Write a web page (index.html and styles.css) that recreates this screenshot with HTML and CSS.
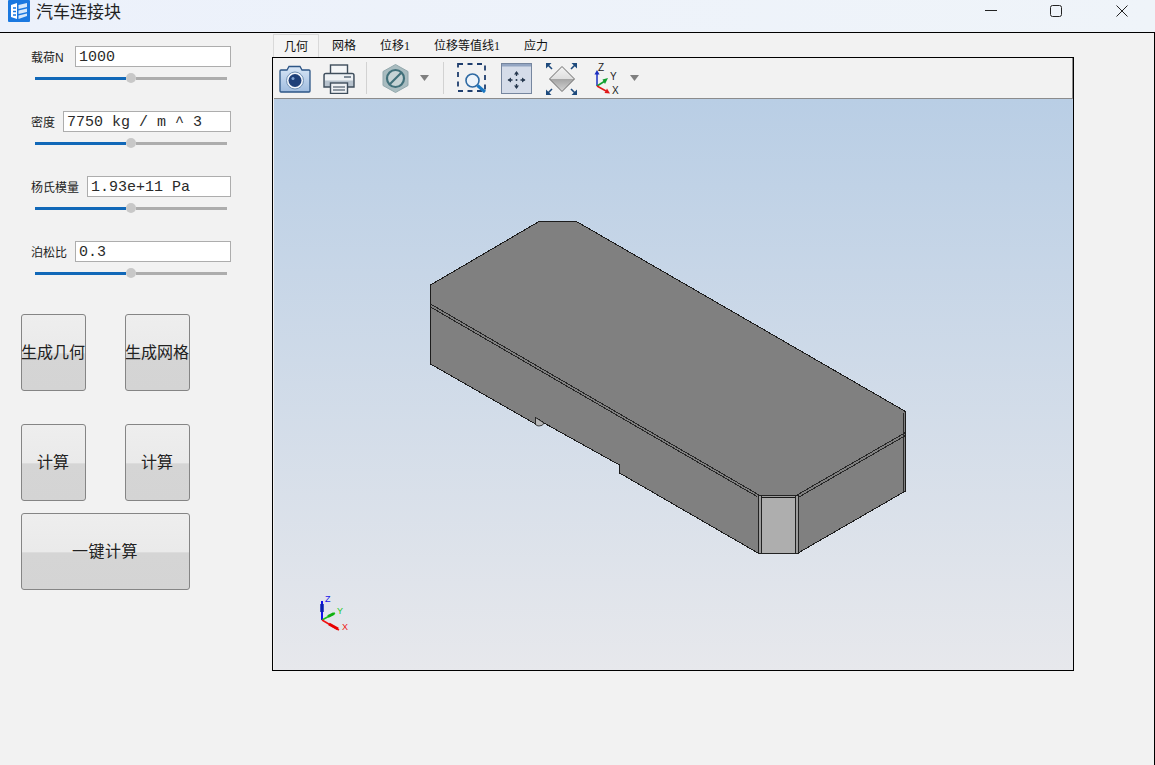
FILE: index.html
```html
<!DOCTYPE html>
<html lang="zh">
<head>
<meta charset="utf-8">
<title>汽车连接块</title>
<link rel="stylesheet" href="styles.css">
</head>
<body>
<div class="window">
  <header class="titlebar">
    <svg class="app-icon" width="22" height="22" viewBox="0 0 22 22">
      <rect width="22" height="22" rx="1" fill="#1a78e0"/>
      <path d="M3 5 L9 3 V19 L3 17 Z" fill="#fff"/>
      <path d="M5 8 H8 M5 11.500 H8 M5 15 H8" stroke="#1a78e0" stroke-width="1.500"/>
      <path d="M10.500 5 L19 3 V7 L10.500 9 Z M10.500 10.500 L19 8.500 V12 L10.500 14 Z M10.500 15.500 L19 13.500 V16 L10.500 19 Z" fill="#d6e8fb"/>
    </svg>
    <span class="app-title">汽车连接块</span>
    <div class="win-controls">
      <svg class="ctl-min" width="12" height="12" viewBox="0 0 12 12"><path d="M0 5.500 H12" stroke="#222" stroke-width="1"/></svg>
      <svg class="ctl-max" width="12" height="12" viewBox="0 0 12 12"><rect x="0.500" y="0.500" width="11" height="11" rx="2" fill="none" stroke="#222" stroke-width="1"/></svg>
      <svg class="ctl-close" width="12" height="12" viewBox="0 0 12 12"><path d="M0.500 0.500 L11.500 11.500 M11.500 0.500 L0.500 11.500" stroke="#222" stroke-width="1"/></svg>
    </div>
  </header>

  <div class="client">
    <aside class="side">
      <div class="param">
        <div class="param-row"><label class="param-label">载荷N</label><input class="param-input w156" value="1000"></div>
        <div class="slider"><span class="slider-fill"></span><span class="slider-thumb"></span><span class="slider-rest"></span></div>
      </div>
      <div class="param">
        <div class="param-row"><label class="param-label">密度</label><input class="param-input w168" value="7750 kg / m ^ 3"></div>
        <div class="slider"><span class="slider-fill"></span><span class="slider-thumb"></span><span class="slider-rest"></span></div>
      </div>
      <div class="param">
        <div class="param-row"><label class="param-label">杨氏模量</label><input class="param-input w144" value="1.93e+11 Pa"></div>
        <div class="slider"><span class="slider-fill"></span><span class="slider-thumb"></span><span class="slider-rest"></span></div>
      </div>
      <div class="param">
        <div class="param-row"><label class="param-label">泊松比</label><input class="param-input w156" value="0.3"></div>
        <div class="slider"><span class="slider-fill"></span><span class="slider-thumb"></span><span class="slider-rest"></span></div>
      </div>

      <div class="btn-row first">
        <button class="btn">生成几何</button>
        <button class="btn">生成网格</button>
      </div>
      <div class="btn-row second">
        <button class="btn">计算</button>
        <button class="btn">计算</button>
      </div>
      <div class="btn-row">
        <button class="btn wide">一键计算</button>
      </div>
    </aside>

    <main class="main">
      <nav class="tabs">
        <span class="tab active">几何</span>
        <span class="tab">网格</span>
        <span class="tab">位移1</span>
        <span class="tab">位移等值线1</span>
        <span class="tab">应力</span>
      </nav>
      <section class="frame">
        <div class="toolbar">
          <svg class="ml5" width="32" height="32" viewBox="0 0 32 32">
            <defs><linearGradient id="cam" x1="0" y1="0" x2="0" y2="1"><stop offset="0" stop-color="#d8e6f6"/><stop offset="1" stop-color="#9fbcdf"/></linearGradient></defs>
            <path d="M2 8 H8 L10 4.500 H21 L23 8 H30 Q31 8 31 9 V29 Q31 30 30 30 H2 Q1 30 1 29 V9 Q1 8 2 8 Z" fill="url(#cam)" stroke="#2d5686" stroke-width="1.300"/>
            <circle cx="16" cy="18.500" r="8.500" fill="#f2f6fb" stroke="#6f8fb3"/>
            <circle cx="16" cy="18.500" r="6.500" fill="#1e3f78"/>
            <circle cx="14" cy="16.500" r="1.500" fill="#7fa2d0"/>
          </svg>
          <svg class="ml12" width="32" height="32" viewBox="0 0 32 32">
            <rect x="7.500" y="3" width="17" height="10" fill="#f4f6f8" stroke="#3f4e5c" stroke-width="1.400"/>
            <path d="M3 11.500 H29 Q31 11.500 31 13.500 V25 H1 V13.500 Q1 11.500 3 11.500 Z" fill="#b7c2cd" stroke="#3f4e5c" stroke-width="1.400"/>
            <rect x="2" y="12.500" width="28" height="6" fill="#eef1f4"/>
            <rect x="21" y="14" width="7" height="2" fill="#7f8c99"/>
            <rect x="7.500" y="21" width="17" height="10.500" fill="#eef1f4" stroke="#3f4e5c" stroke-width="1.400"/>
            <path d="M10 25 H22 M10 28 H22" stroke="#6f7b87" stroke-width="1.400"/>
          </svg>
          <span class="tool-sep ml11"></span>
          <svg class="ml13" width="32" height="32" viewBox="0 0 32 32">
            <path d="M15.500 2.500 L28 9.500 V23.500 L15.500 30.500 L3 23.500 V9.500 Z" fill="#a9bcc0" stroke="#93a8ad"/>
            <circle cx="15.500" cy="16.500" r="8.500" fill="#c6d3d5" stroke="#41707a" stroke-width="2.200"/>
            <path d="M10 22 L21 11" stroke="#41707a" stroke-width="2.200"/>
          </svg>
          <svg class="ml6" width="12" height="8" viewBox="0 0 12 8"><path d="M2 1 H11 L6.500 7 Z" fill="#7f7f7f"/></svg>
          <span class="tool-sep ml13"></span>
          <svg class="ml12" width="32" height="32" viewBox="0 0 32 32">
            <rect x="2" y="2" width="27" height="27" fill="none" stroke="#1f3e6e" stroke-width="1.800" stroke-dasharray="5 4.500"/>
            <circle cx="16.500" cy="18.500" r="6.500" fill="#eef4fa" stroke="#2f6aa3" stroke-width="1.600"/>
            <path d="M21.500 23.500 L29 30" stroke="#1b78c2" stroke-width="3"/>
          </svg>
          <svg class="ml12" width="32" height="32" viewBox="0 0 32 32">
            <rect x="1.500" y="1.500" width="30" height="30" fill="#d5dce9" stroke="#76869f"/>
            <rect x="2" y="2" width="29" height="2.500" fill="#93a5c2"/>
            <circle cx="16.500" cy="18" r="1" fill="#27384f"/>
            <path d="M16.500 10 V14 M16.500 22 V26 M8.500 18 H12.500 M20.500 18 H24.500" stroke="#27384f" stroke-width="1.300"/>
            <path d="M16.500 9 L14 12.500 H19 Z M16.500 27 L14 23.500 H19 Z M7.500 18 L11 15.500 V20.500 Z M25.500 18 L22 15.500 V20.500 Z" fill="#27384f"/>
          </svg>
          <svg class="ml13" width="33" height="33" viewBox="0 0 33 33">
            <defs><linearGradient id="dia" x1="0" y1="0" x2="0" y2="1"><stop offset="0" stop-color="#f4f4f4"/><stop offset="0.500" stop-color="#dedede"/><stop offset="0.500" stop-color="#a4a4a4"/><stop offset="1" stop-color="#d4d4d4"/></linearGradient></defs>
            <path d="M17 4.500 L29.500 17 L17 29.500 L4.500 17 Z" fill="url(#dia)" stroke="#6a6a6a"/>
            <path d="M3 3 L7 7 M30 3 L26 7 M3 31 L7 27 M30 31 L26 27" stroke="#1e4a7d" stroke-width="1.600" fill="none"/>
            <path d="M1 1 H6.500 L1 6.500 Z M32 1 H26.500 L32 6.500 Z M1 33 H6.500 L1 27.500 Z M32 33 H26.500 L32 27.500 Z" fill="#1e4a7d"/>
          </svg>
          <svg class="ml12" width="32" height="36" viewBox="0 0 32 36">
            <path d="M7 26 V13" stroke="#1b2fc0" stroke-width="1.500"/>
            <path d="M7 10 L4.500 14.500 H9.500 Z" fill="#1b2fc0"/>
            <path d="M7 26 L15 21" stroke="#10a030" stroke-width="1.500"/>
            <path d="M18 18 L12.500 19.500 L15 24 Z" fill="#10a030"/>
            <path d="M7 26 L16 31" stroke="#e01818" stroke-width="1.500"/>
            <path d="M20 33.500 L14.500 33 L17 28.500 Z" fill="#e01818"/>
            <text class="axis-tool" x="8" y="11">Z</text>
            <text class="axis-tool" x="20" y="20">Y</text>
            <text class="axis-tool" x="22" y="34">X</text>
          </svg>
          <svg class="ml6" width="12" height="8" viewBox="0 0 12 8"><path d="M2 1 H11 L6.500 7 Z" fill="#7f7f7f"/></svg>
        </div>
        <div class="viewer">
          <svg class="scene" width="799" height="571" viewBox="274 99 799 571">
            <g class="crisp">
              <path d="M430.500 285 L539 221.500 H576.500 L905.500 411.500 V491 L798 553 H758 L619.500 473 V465 L544 423 L535.500 417.500 V424 L430.500 364 Z" fill="#808080" stroke="#1c1c1c" stroke-width="1"/>
              <path d="M430.500 285 V364" stroke="#1c1c1c" stroke-width="1.600"/>
              <path d="M903.500 413 V492" stroke="#2a2a2a" stroke-width="1"/>
              <path d="M430.500 304 L759 495 M430.500 307 L757 496.500" stroke="#262626" stroke-width="1" fill="none"/>
              <path d="M797 495 L905.500 432.500 M799 497 L905.500 435.500" stroke="#262626" stroke-width="1" fill="none"/>
              <rect x="758" y="496" width="40.500" height="57" fill="#9c9c9c"/>
              <rect x="762" y="498" width="33" height="55" fill="#aeaeae"/>
              <path d="M758 496 V553 M761.500 496 V553 M795 496 V553 M798.500 496 V553 M758 553 H798.500" stroke="#222" stroke-width="1" fill="none"/>
              <path d="M758 495.500 H798.500" stroke="#222" stroke-width="1"/>
              <path d="M761 497.500 H795" stroke="#1a1a1a" stroke-width="1.500"/>
            </g>
            <path d="M535.500 417.500 L544 423 Q543 426 539 426 Q536 426 535.500 424 Z" fill="#b5b5b5" stroke="#1c1c1c" stroke-width="0.800"/>
            <path d="M322 620 V601" stroke="#1010e8" stroke-width="2"/>
            <path d="M322 612 V604" stroke="#0a1fb0" stroke-width="3.500"/>
            <path d="M322 620 L335 613" stroke="#19c219" stroke-width="1.500"/>
            <path d="M328 616.500 L334 613.500" stroke="#10b010" stroke-width="3"/>
            <path d="M322 620 L339 630" stroke="#f01010" stroke-width="1.500"/>
            <path d="M329 624 L338 629" stroke="#e80000" stroke-width="3"/>
            <text class="axis-z" x="325" y="602">Z</text>
            <text class="axis-y" x="337" y="614">Y</text>
            <text class="axis-x" x="342" y="630">X</text>
          </svg>
        </div>
      </section>
    </main>
  </div>
</div>
</body>
</html>
```
FILE: styles.css
```css
* { box-sizing: border-box; }
html, body { margin: 0; height: 100%; overflow: hidden; }
body { font-family: "Liberation Serif", "Noto Sans CJK SC", serif; background: #f0f0f0; color: #111; }

.window { width: 1155px; height: 765px; display: flex; flex-direction: column; }

.titlebar {
  height: 33px; flex: none; display: flex; align-items: flex-start;
  padding-left: 8px; border-bottom: 1px solid #000;
  background: linear-gradient(90deg, #ecf1fb, #eff4f9);
}
.app-icon { flex: none; }
.app-title {
  margin-left: 6px; font: 17px/22px "Noto Sans CJK SC", sans-serif; color: #222;
}
.win-controls { margin-left: auto; display: flex; align-items: flex-start; padding-right: 27px; padding-top: 5px; }
.ctl-max { margin-left: 53px; }
.ctl-close { margin-left: 54px; }

.client { flex: 1; display: flex; border-right: 1px solid #000; background: #f2f2f2; min-height: 0; }

.side { width: 272px; flex: none; padding-top: 13px; }
.param { height: 65px; }
.param-row { display: flex; justify-content: space-between; align-items: center; width: 231px; padding-left: 31px; height: 21px; }
.param-label { font: 12px/16px "Liberation Sans", "Noto Sans CJK SC", sans-serif; color: #222; margin-top: 2px; }
.param-input {
  height: 21px; border: 1px solid #adadad; background: #fff; padding: 1px 0 0 3px;
  font: 15px/19px "Liberation Mono", monospace; color: #2a2a2a; border-radius: 0; outline: none;
}
.w156 { width: 156px; }
.w168 { width: 168px; }
.w144 { width: 144px; }

.slider { display: flex; align-items: center; width: 192px; height: 10px; margin: 6px 0 0 35px; }
.slider-fill { width: 91px; height: 3px; background: #1168b8; }
.slider-thumb { width: 10px; height: 10px; border-radius: 50%; background: #c8c8c8; flex: none; }
.slider-rest { flex: 1; height: 3px; background: #adadad; }

.btn-row { display: flex; gap: 39px; margin-left: 21px; }
.btn-row.first { margin-top: 8px; margin-bottom: 33px; }
.btn-row.second { margin-bottom: 12px; }
.btn {
  width: 65px; height: 77px; padding: 0 1px 4px 0; border: 1px solid #858585; border-radius: 3px;
  background: linear-gradient(180deg, #eeeeee 0%, #eaeaea 50%, #d5d5d5 52%, #d4d4d4 100%);
  font: 16px/20px "Noto Sans CJK SC", sans-serif; color: #222; white-space: nowrap;
  display: flex; align-items: center; justify-content: center;
}
.btn.wide { width: 169px; letter-spacing: 0.5px; }

.main { width: 802px; flex: none; display: flex; flex-direction: column; }
.tabs { height: 24px; display: flex; align-items: flex-end; padding-left: 1px; flex: none; }
.tab { padding: 0 12px; height: 21px; font-size: 12px; line-height: 21px; color: #111; }
.tab.active {
  height: 23px; line-height: 24px; padding: 0 10px; margin-right: 1px;
  background: #f4f4f4; border: 1px solid #d9d9d9; border-bottom: none;
}

.frame { width: 802px; height: 614px; border: 1px solid #000; display: flex; flex-direction: column; }
.toolbar {
  height: 41px; flex: none; display: flex; align-items: center;
  margin-left: 1px; border-bottom: 1px solid #8c8c8c; border-right: 1px solid #8c8c8c; background: #f2f2f2;
  padding-left: 5px;
}
.tool-sep { width: 1px; height: 32px; background: #d2d2d2; flex: none; }
.toolbar svg { flex: none; }
.toolbar .ml5:first-child { margin-left: 0; }
.ml5 { margin-left: 5px; }
.ml6 { margin-left: 6px; }
.ml11 { margin-left: 11px; }
.ml12 { margin-left: 12px; }
.ml13 { margin-left: 13px; }

.axis-tool { font: 10px "Liberation Sans", sans-serif; fill: #222; }

.viewer { flex: 1; margin-left: 1px; background: linear-gradient(180deg, #b9cee5 0%, #e7e8ec 100%); min-height: 0; }
.scene { display: block; }
.crisp { shape-rendering: crispEdges; }
.axis-z, .axis-y, .axis-x { font: 9px "Liberation Sans", sans-serif; }
.axis-z { fill: #1818e8; }
.axis-y { fill: #1fc81f; }
.axis-x { fill: #ee1515; }
```
